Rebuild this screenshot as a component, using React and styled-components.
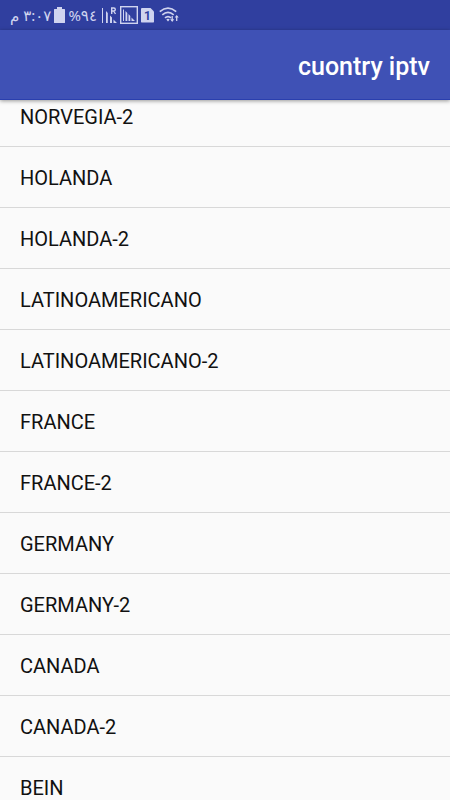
import React from 'react';
import styled, { createGlobalStyle } from 'styled-components';

const GlobalStyle = createGlobalStyle`
  * {
    box-sizing: border-box;
  }

  body {
    margin: 0;
    background: #fafafa;
    font-family: Roboto, 'Noto Sans', sans-serif;
  }
`;

const Screen = styled('div')`
  display: flex;
  flex-direction: column;
  height: 100vh;
`;

const StatusBar = styled('div')`
  display: flex;
  align-items: center;
  flex-shrink: 0;
  height: 30px;
  padding: 0 10px;
  gap: 5px;
  background: #303f9f;
  color: #d0d4ef;
`;

const StatusGroup = styled('div')`
  display: flex;
  align-items: center;
  gap: 3px;
`;

const StatusText = styled('span')`
  direction: rtl;
  font-family: 'Noto Sans', 'DejaVu Sans', sans-serif;
  font-size: 15px;
  line-height: 20px;
  white-space: nowrap;
`;

const StatusIcon = styled('svg')`
  display: block;
  flex-shrink: 0;
`;

const AppBar = styled('header')`
  position: relative;
  z-index: 1;
  display: flex;
  align-items: center;
  justify-content: flex-end;
  flex-shrink: 0;
  height: 70px;
  padding: 4px 20px 0;
  background: #3f51b5;
  border-bottom: 1px solid #2a3fae;
  box-shadow: 0 1px 4px rgba(0, 0, 0, 0.4);
`;

const Title = styled('h1')`
  margin: 0;
  color: #fff;
  font-size: 25px;
  font-weight: 500;
  line-height: 32px;
`;

const Scroller = styled('main')`
  flex: 1;
  min-height: 0;
  overflow-y: auto;
  scrollbar-width: none;
`;

// the first row is partly scrolled under the app bar
const CountryList = styled('ul')`
  margin: -14px 0 0;
  padding: 0;
  list-style: none;
`;

const CountryButton = styled('button')`
  display: block;
  width: 100%;
  height: 61px;
  padding: 1px 20px 0;
  border: none;
  border-bottom: 1px solid #d8d8d8;
  background: transparent;
  color: #111;
  font-family: inherit;
  font-size: 20px;
  line-height: 24px;
  text-align: left;
  cursor: pointer;
`;

const countries = [
  'NORVEGIA-2',
  'HOLANDA',
  'HOLANDA-2',
  'LATINOAMERICANO',
  'LATINOAMERICANO-2',
  'FRANCE',
  'FRANCE-2',
  'GERMANY',
  'GERMANY-2',
  'CANADA',
  'CANADA-2',
  'BEIN',
];

const BatteryIcon = () => (
  <StatusIcon width="11" height="16" viewBox="0 0 11 16" fill="currentColor">
    <path d="M3 0h5v2h2.4a.6.6 0 0 1 .6.6v12.8a.6.6 0 0 1-.6.6H.6a.6.6 0 0 1-.6-.6V2.6a.6.6 0 0 1 .6-.6H3z" />
  </StatusIcon>
);

const RoamingIcon = () => (
  <StatusIcon width="15" height="16" viewBox="0 0 15 16" fill="currentColor">
    <path d="M0 1h1v15H0zM4 4l1.800 2v10H4zM8 8.500l2 2V16H8zM11.500 12.500L15 16h-3.500z" />
    <path
      d="M9.700 7V1h2.100a1.500 1.500 0 0 1 0 3H9.700M11.600 4l1.900 3"
      fill="none"
      stroke="currentColor"
      strokeWidth="1.400"
    />
  </StatusIcon>
);

const BoxedSignalIcon = () => (
  <StatusIcon width="18" height="18" viewBox="0 0 18 18" fill="currentColor">
    <rect x=".7" y=".7" width="16.6" height="16.6" fill="none" stroke="currentColor" strokeWidth="1.4" />
    <path d="M3 3.500h1V15H3zM5.500 5l1.800 2v8H5.500zM8.500 8l1.800 2v5H8.500zM11.500 11.500l3.500 3.500h-3.500z" />
  </StatusIcon>
);

const SimShape = styled('span')`
  flex-shrink: 0;
  width: 13px;
  height: 15px;
  border-radius: 1px;
  background: #d0d4ef;
  clip-path: polygon(0 0, 9px 0, 100% 4px, 100% 100%, 0 100%);
  color: #303f9f;
  font-size: 12px;
  font-weight: 700;
  line-height: 16px;
  text-align: center;
`;

const WifiIcon = () => (
  <StatusIcon width="22" height="16" viewBox="-2 0 22 16" fill="none" stroke="currentColor">
    <path d="M.8 4.600Q9 -2.200 17.200 4.600M3.300 7.800Q9 3 14.700 7.800M6 10.900Q9 8.300 12 10.900" strokeWidth="1.700" />
    <path d="M7.300 12.400Q9 11 10.700 12.400L9 14.500z" fill="currentColor" stroke="none" />
    <path d="M13.200 9v5M17.700 14V9" strokeWidth="1.300" />
    <path d="M11.200 12.300h4l-2 2.700zM15.700 10.600h4l-2-2.700z" fill="currentColor" stroke="none" />
  </StatusIcon>
);

const App = () => (
  <>
    <GlobalStyle />
    <Screen>
      <StatusBar>
        <StatusGroup>
          <StatusText>٣:٠٧ م</StatusText>
          <BatteryIcon />
          <StatusText>٩٤%</StatusText>
        </StatusGroup>
        <StatusGroup>
          <RoamingIcon />
          <BoxedSignalIcon />
          <SimShape>1</SimShape>
          <WifiIcon />
        </StatusGroup>
      </StatusBar>
      <AppBar>
        <Title>cuontry iptv</Title>
      </AppBar>
      <Scroller>
        <CountryList>
          {countries.map(name => (
            <li key={name}>
              <CountryButton type="button">{name}</CountryButton>
            </li>
          ))}
        </CountryList>
      </Scroller>
    </Screen>
  </>
);

export default App;
